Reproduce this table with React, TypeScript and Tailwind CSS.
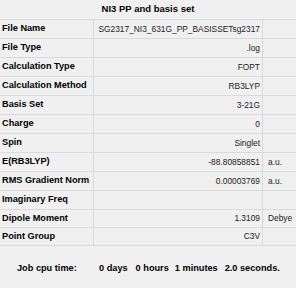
const rows: { label: string; value: string; unit?: string; short?: boolean }[] = [
  { label: "File Name", value: "SG2317_NI3_631G_PP_BASISSETsg2317" },
  { label: "File Type", value: ".log" },
  { label: "Calculation Type", value: "FOPT" },
  { label: "Calculation Method", value: "RB3LYP" },
  { label: "Basis Set", value: "3-21G" },
  { label: "Charge", value: "0" },
  { label: "Spin", value: "Singlet" },
  { label: "E(RB3LYP)", value: "-88.80858851", unit: "a.u." },
  { label: "RMS Gradient Norm", value: "0.00003769", unit: "a.u." },
  { label: "Imaginary Freq", value: "" },
  { label: "Dipole Moment", value: "1.3109", unit: "Debye", short: true },
  { label: "Point Group", value: "C3V", short: true },
];

export default function App() {
  return (
    <div
      className="flex h-[288px] w-[296px] flex-col bg-[#f0f0f0] text-black"
      style={{ fontFamily: '"Liberation Sans", Arial, sans-serif' }}
    >
      <div className="flex h-[20px] items-center justify-center border-b border-[#dadada] text-[9.5px] font-bold">
        NI3 PP and basis set
      </div>

      {rows.map((row) => (
        <div
          key={row.label}
          className={`grid grid-cols-[94px_169px_33px] border-b border-[#dadada] ${
            row.short ? "h-[18px]" : "h-[19px]"
          }`}
        >
          <div className="flex items-center border-r border-[#dadada] pl-[2px] text-[9.2px] font-bold">
            {row.label}
          </div>
          <div className="flex items-center justify-end border-r border-[#dadada] pr-[2px] text-[8.4px] text-[#222]">
            {row.value}
          </div>
          <div className="flex items-center pl-[5px] text-[8.4px] text-[#222]">{row.unit}</div>
        </div>
      ))}

      <div className="flex flex-1 items-center pl-[17px] pt-[3px] text-[9.2px] font-bold">
        <span className="w-[82px]">Job cpu time:</span>
        <span>0 days</span>
        <span className="ml-[8px]">0 hours</span>
        <span className="ml-[6px]">1 minutes</span>
        <span className="ml-[7px]">2.0 seconds.</span>
      </div>
    </div>
  );
}
